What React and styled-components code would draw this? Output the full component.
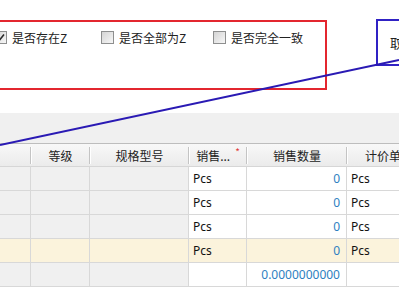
import React from 'react'
import styled, { createGlobalStyle } from 'styled-components'

const GlobalStyle = createGlobalStyle`
  html, body { margin: 0; padding: 0; background: #fff; }
  body { font-family: "Noto Sans CJK SC", "Noto Sans", sans-serif; }
`

const Page = styled.div`
  position: relative;
  width: 399px;
  height: 300px;
  overflow: hidden;
  background: #fff;
`

const TopArea = styled.div`
  display: flex;
  align-items: flex-start;
  height: 113px;
  padding-top: 19px;
  box-sizing: border-box;
`

const OptionPanel = styled.div`
  flex: none;
  width: 347px;
  height: 70px;
  margin: 1px 0 0 -20px;
  box-sizing: border-box;
  border: 2px solid #e3262f;
  padding: 9px 0 0 12px;
  display: flex;
  align-items: flex-start;
`

const Option = styled.label`
  flex: none;
  width: ${p => p.$width}px;
  display: flex;
  align-items: center;
  gap: 5px;
  font-size: 12px;
  line-height: 13px;
  color: #222;
`

const Box = styled.span`
  flex: none;
  width: 13px;
  height: 13px;
  box-sizing: border-box;
  border: 1px solid #8e8f8f;
  background: linear-gradient(135deg, #d4d4d4, #f7f7f7);
  display: flex;
  align-items: center;
  justify-content: center;
`

const ButtonPanel = styled.div`
  flex: none;
  width: 60px;
  height: 47px;
  margin-left: 49px;
  box-sizing: border-box;
  border: 2px solid #3022c4;
  padding-left: 12px;
  display: flex;
  align-items: center;
  font-size: 13px;
  color: #222;
  white-space: nowrap;
`

const Band = styled.div`
  height: 30px;
  background: #f0f0f0;
`

const cols = '31px 59px 99px 58px 100px 84px'

const HeaderRow = styled.div`
  display: grid;
  grid-template-columns: ${cols};
  height: 24px;
  box-sizing: border-box;
  border-top: 1px solid #bdbdbd;
  border-bottom: 1px solid #d6d6d6;
  background: linear-gradient(#f8f8f8, #ebebeb);
`

const HeadCell = styled.div`
  position: relative;
  display: flex;
  align-items: center;
  justify-content: center;
  font-size: 12px;
  color: #222;
  white-space: nowrap;
  &::after {
    content: '';
    position: absolute;
    right: 0;
    top: 3px;
    bottom: 2px;
    width: 1px;
    background: #c4c4c4;
    box-shadow: 1px 0 0 #fff;
  }
`

const Star = styled.span`
  align-self: flex-start;
  margin: 3px 0 0 5px;
  font-size: 10px;
  line-height: 10px;
  color: #e23a3a;
`

const Row = styled.div`
  display: grid;
  grid-template-columns: ${cols};
  height: 24px;
`

const Cell = styled.div`
  box-sizing: border-box;
  border-right: 1px solid #d8d8d8;
  border-bottom: 1px solid #d8d8d8;
  background: ${p => (p.$yellow ? '#fbf3dc' : p.$readonly ? '#f0f0f0' : '#fff')};
  display: flex;
  align-items: center;
  justify-content: ${p => (p.$right ? 'flex-end' : 'flex-start')};
  padding: 0 6px 0 4px;
  font-family: "Noto Sans", sans-serif;
  font-size: 12px;
  color: ${p => (p.$num ? '#2d7fc1' : '#111')};
  white-space: nowrap;
  overflow: hidden;
`

const Overlay = styled.svg`
  position: absolute;
  left: 0;
  top: 0;
  pointer-events: none;
`

const options = [
  { label: '是否存在Z', checked: true, width: 107 },
  { label: '是否全部为Z', checked: false, width: 112 },
  { label: '是否完全一致', checked: false, width: 112 },
]

const rows = [
  { unit: 'Pcs', qty: '0', price: 'Pcs' },
  { unit: 'Pcs', qty: '0', price: 'Pcs' },
  { unit: 'Pcs', qty: '0', price: 'Pcs' },
  { unit: 'Pcs', qty: '0', price: 'Pcs', yellow: true },
  { unit: '', qty: '0.0000000000', price: '' },
]

export default function App() {
  return (
    <Page>
      <GlobalStyle />
      <TopArea>
        <OptionPanel>
          {options.map(o => (
            <Option key={o.label} $width={o.width}>
              <Box>
                {o.checked && (
                  <svg width="9" height="9" viewBox="0 0 9 9">
                    <path d="M1 4.5 L3.5 7 L8 1.5" fill="none" stroke="#2a2a2a" strokeWidth="1.6" />
                  </svg>
                )}
              </Box>
              {o.label}
            </Option>
          ))}
        </OptionPanel>
        <ButtonPanel>取消</ButtonPanel>
      </TopArea>
      <Band />
      <HeaderRow>
        <HeadCell />
        <HeadCell>等级</HeadCell>
        <HeadCell>规格型号</HeadCell>
        <HeadCell>销售...<Star>*</Star></HeadCell>
        <HeadCell>销售数量</HeadCell>
        <HeadCell>计价单位</HeadCell>
      </HeaderRow>
      {rows.map((r, i) => (
        <Row key={i}>
          <Cell $readonly $yellow={r.yellow} />
          <Cell $readonly $yellow={r.yellow} />
          <Cell $readonly $yellow={r.yellow} />
          <Cell $yellow={r.yellow}>{r.unit}</Cell>
          <Cell $yellow={r.yellow} $right $num>{r.qty}</Cell>
          <Cell $yellow={r.yellow}>{r.price}</Cell>
        </Row>
      ))}
      <Overlay width="399" height="300">
        <line x1="0" y1="145" x2="399" y2="60" stroke="#2a1ab4" strokeWidth="2" />
      </Overlay>
    </Page>
  )
}
